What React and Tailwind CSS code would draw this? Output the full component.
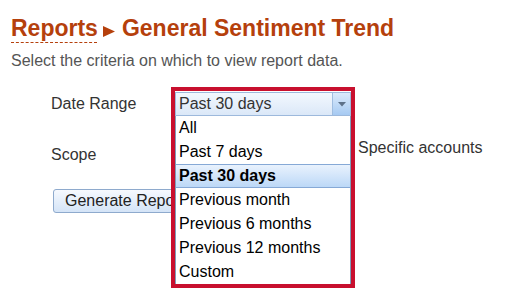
import React from "react";

const options = [
  "All",
  "Past 7 days",
  "Past 30 days",
  "Previous month",
  "Previous 6 months",
  "Previous 12 months",
  "Custom",
];

const App = () => {
  const selected = "Past 30 days";

  return (
    <div className="w-[506px] h-[306px] bg-white px-[11px] pt-[14px] overflow-hidden font-['Liberation_Sans',Arial,sans-serif]">
      <h1 className="h-[28px] text-[23px] leading-[28px] font-bold text-[#b5400c] whitespace-nowrap flex items-baseline">
        <span className="underline decoration-dashed decoration-1 underline-offset-[6px]">
          Reports
        </span>
        <svg width="12" height="11" viewBox="0 0 12 11" className="ml-[5px] mr-[7px] self-end mb-[5px]">
          <path d="M0 0 L12 5.5 L0 11 Z" fill="#b5400c" />
        </svg>
        <span>General Sentiment Trend</span>
      </h1>
      <p className="mt-[9px] text-[16px] leading-[20px] text-[#555]">
        Select the criteria on which to view report data.
      </p>

      {/* Date range */}
      <div className="mt-[21px] pl-[40px] flex items-center h-[24px] text-[16px] text-[#333]">
        <div className="w-[124px]">Date Range</div>
        <div className="relative w-[176px] h-[24px] z-10">
          <div className="absolute left-[-4px] top-[-5px] w-[184px] border-4 border-[#c8102e] bg-white">
            <div className="mt-[1px] h-[24px] flex border border-[#9db9dc] bg-gradient-to-b from-[#f3f8fe] to-[#dbe8f8]">
              <div className="flex-1 pl-[3px] leading-[22px] text-[#333]">{selected}</div>
              <div className="w-[18px] border-l border-[#9fbde0] bg-gradient-to-b from-[#dceafb] to-[#a6caf2] flex items-center justify-center">
                <svg width="8" height="5" viewBox="0 0 8 5">
                  <path d="M0 0 H8 L4 4.5 Z" fill="#5d7189" />
                </svg>
              </div>
            </div>
            <ul className="border-x border-[#7f9db9] bg-white text-black">
              {options.map((o) =>
                o === selected ? (
                  <li
                    key={o}
                    className="h-[24px] leading-[22px] pl-[3px] font-bold border-y border-[#86a9d6] bg-gradient-to-b from-[#e9f2fd] to-[#bcd8f7]"
                  >
                    {o}
                  </li>
                ) : (
                  <li key={o} className="h-[24px] leading-[23px] pl-[3px]">
                    {o}
                  </li>
                )
              )}
            </ul>
          </div>
        </div>
      </div>

      {/* Scope */}
      <div className="mt-[22px] pl-[40px] flex items-start text-[16px] leading-[20px] text-[#333]">
        <div className="w-[124px] mt-[7px]">Scope</div>
        <div className="flex">
          <span className="ml-[183px] whitespace-nowrap">Specific accounts</span>
        </div>
      </div>

      {/* Generate */}
      <div className="mt-[24px] pl-[42px]">
        <button className="h-[24px] px-[11px] rounded-[3px] border border-[#8eaacd] bg-gradient-to-b from-[#f6f9fe] to-[#d4e4f7] text-[16px] leading-[22px] text-[#222] whitespace-nowrap">
          Generate Report
        </button>
      </div>
    </div>
  );
};

export default App;
